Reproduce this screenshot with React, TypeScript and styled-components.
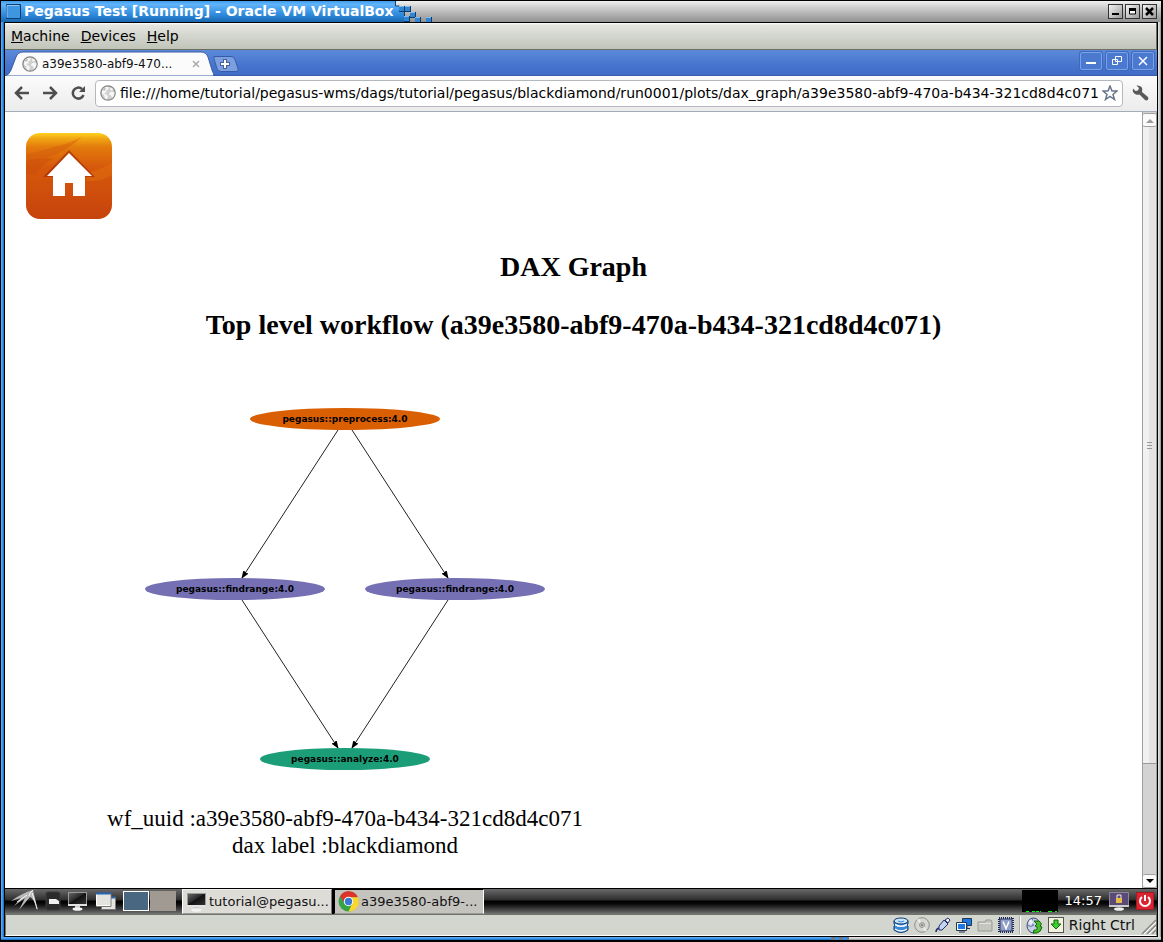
import React from 'react';
import styled, { createGlobalStyle } from 'styled-components';

const Global = createGlobalStyle`
  * { box-sizing: border-box; }
  body { margin: 0; background: #000; font-family: "DejaVu Sans", sans-serif; }
  button, input { font-family: inherit; color: inherit; margin: 0; }
  button { border: 0; padding: 0; background: none; }
  svg { display: block; flex: none; }
`;

const Frame = styled.div`
  display: flex;
  flex-direction: column;
  min-height: 100vh;
  padding: 1px 2px 2px 1px;
  background: #000;
`;

const TitleBar = styled.header`
  display: flex;
  flex: none;
  height: 21px;
  background: linear-gradient(#f0f0f0, #cfcfcf 30%, #909090);
`;

const Title = styled.h1`
  display: flex;
  align-items: center;
  gap: 3px;
  margin: 0;
  padding: 0 0 1px 5px;
  background: linear-gradient(#3d9cec, #62b4fb 15%, #2a86d8 70%, #1b66ad);
  color: #fff;
  font-size: 14px;
  line-height: 20px;
  font-weight: bold;
  white-space: nowrap;
`;

const TitleButtons = styled.div`
  display: flex;
  align-items: center;
  gap: 2px;
  margin-left: auto;
  padding-right: 4px;
`;

const FrameButton = styled.button`
  display: grid;
  place-items: center;
  width: 15px;
  height: 15px;
  border: 1px solid #333;
  background: linear-gradient(135deg, #f4f4f4, #9a9a9a);
`;

const Middle = styled.div`
  display: flex;
  flex: 1;
`;

const Edge = styled.div<{ $tone: 'blue' | 'grey' }>`
  flex: none;
  width: 3px;
  background: ${(p) =>
    p.$tone === 'blue'
      ? 'linear-gradient(90deg, #62b4fb, #2e90ee 60%, #1b66ad)'
      : 'linear-gradient(90deg, #e8e8e8, #c6c6c6 60%, #888)'};
`;

const Client = styled.main`
  display: flex;
  flex: 1;
  flex-direction: column;
  min-width: 0;
  border: 1px solid #000;
`;

const BottomEdge = styled.div`
  display: flex;
  flex: none;
  height: 3px;
  background: linear-gradient(#e8e8e8, #c6c6c6 60%, #888);
`;

const BottomBlue = styled.div`
  flex: 843;
  background: linear-gradient(#62b4fb, #2e90ee 60%, #1b66ad);
`;

const BottomGrey = styled.div`
  flex: 317;
`;

const MenuBar = styled.nav`
  display: flex;
  flex: none;
  gap: 11px;
  height: 27px;
  padding: 0 6px;
  border: solid #6c6e64;
  border-width: 0 1px 1px 0;
  background: linear-gradient(#fff, #e3e5df 8%, #c1c4b9);
`;

const MenuItem = styled.button`
  color: #000;
  font-size: 14px;
  &::first-letter { text-decoration: underline; }
`;

const TabStrip = styled.div`
  display: flex;
  flex: none;
  height: 26px;
  background: linear-gradient(#5c8ad9, #4774cd 60%, #3f6bc6);
  box-shadow: inset 0 -1px #3a5da8;
`;

const Tab = styled.div`
  position: relative;
  display: flex;
  align-items: center;
  width: 208px;
  padding: 1px 13px 0 17px;
`;

const TabShape = styled.svg`
  position: absolute;
  left: 0;
  top: 0;
`;

const TabLabel = styled.button`
  position: relative;
  display: flex;
  flex: 1;
  align-items: center;
  gap: 4px;
  color: #111;
  font-size: 12px;
`;

const TabClose = styled.button`
  position: relative;
`;

const NewTab = styled.button`
  align-self: flex-start;
  margin-top: 6px;
`;

const WindowButtons = styled.div`
  display: flex;
  gap: 4px;
  margin: 2px 3px 0 auto;
`;

const WindowButton = styled.button`
  display: grid;
  place-items: center;
  width: 22px;
  height: 18px;
  border: 1px solid #7ba2e8;
  border-radius: 2px;
  background: #4b79d0;
  box-shadow: 0 0 0 1px #3f69bd;
`;

const Toolbar = styled.div`
  display: flex;
  flex: none;
  align-items: center;
  gap: 9px;
  height: 36px;
  padding: 0 8px 1px 9px;
  border-bottom: 1px solid #a3acb8;
  background: linear-gradient(#fbfbfb, #ececec);
`;

const NavButtons = styled.div`
  display: flex;
  gap: 12px;
`;

const ToolButton = styled.button`
  flex: none;
`;

const AddressBar = styled.form`
  display: flex;
  flex: 1;
  align-items: center;
  min-width: 0;
  height: 27px;
  padding: 0 4px;
  border: 1px solid #b4b8bd;
  border-radius: 4px;
  background: #fff;
`;

const AddressInput = styled.input`
  flex: 1;
  min-width: 0;
  border: 0;
  outline: 0;
  padding: 0 0 0 4px;
  background: none;
  color: #000;
  font-size: 14px;
`;

const Viewport = styled.div`
  display: flex;
  flex: 1;
  background: #fff;
`;

const Page = styled.article`
  flex: 1;
  min-width: 0;
  padding: 20px 0 24px;
  color: #000;
  font-family: "Liberation Serif", serif;
`;

const HomeLink = styled.a`
  display: block;
  width: 88px;
  margin-left: 20px;
`;

const Heading = styled.h2`
  margin: 0 0 26px;
  font-size: 28px;
  line-height: 32px;
  text-align: center;
`;

const Headings = styled.header`
  padding-top: 31px;
`;

const Figure = styled.figure`
  width: 680px;
  max-width: 100%;
  margin: 0;
  padding-top: 40px;
  text-align: center;
`;

const Graph = styled.svg`
  margin: 0 auto;
`;

const Caption = styled.figcaption`
  padding-top: 34px;
  font-size: 23px;
  line-height: 27px;
`;

const Scrollbar = styled.div`
  display: flex;
  flex: none;
  flex-direction: column;
  width: 15px;
  padding-top: 1px;
  border: solid #a0a0a0;
  border-width: 0 1px;
  background: #d3d3d3;
`;

const ScrollArrow = styled.button`
  display: grid;
  flex: none;
  place-items: center;
  height: 14px;
  border: solid #a0a0a0;
  border-width: 1px 0;
  border-radius: 2px;
  background: #fbfbfb;
`;

const Thumb = styled.div`
  display: grid;
  flex: 637;
  place-items: center;
  border-bottom: 1px solid #999;
  background: linear-gradient(90deg, #f1f1f1 50%, #e4e4e4 50%);
`;

const Track = styled.div`
  flex: 110;
`;

const Taskbar = styled.footer`
  display: flex;
  flex: none;
  height: 26px;
  border-top: 1px solid #000;
  background: linear-gradient(#6a6a6a, #2c2c2c 45%, #000 47%, #0a0a0a 60%, #5c5c5c 92%, #777);
`;

const Launchers = styled.div`
  display: flex;
  align-items: center;
  gap: 6px;
  padding: 0 6px 2px 4px;
`;

const Pager = styled.div`
  display: flex;
  gap: 1px;
`;

const Desk = styled.button<{ $active?: boolean }>`
  width: 26px;
  height: 20px;
  border: 1px solid ${(p) => (p.$active ? '#fff' : '#a09a92')};
  background: ${(p) => (p.$active ? '#4a6782' : '#a09a92')};
`;

const Tasks = styled.div`
  display: flex;
  gap: 2px;
  background: #000;
`;

const Task = styled.button<{ $active?: boolean }>`
  display: flex;
  align-items: center;
  gap: 2px;
  width: 150px;
  padding: 0 0 0 3px;
  border: 1px solid;
  border-color: ${(p) => (p.$active ? '#000 #fff #999 #000' : '#eee #777 #999 #fff')};
  background: ${(p) => (p.$active ? '#c5c3be' : '#dddcd7')};
  color: #111;
  font-size: 13px;
  white-space: nowrap;
`;

const Tray = styled.div`
  display: flex;
  align-items: center;
  gap: 7px;
  margin-left: auto;
  padding: 0 3px 2px 0;
  color: #fff;
  font-size: 13px;
`;

const StatusBar = styled.footer`
  display: flex;
  flex: none;
  align-items: center;
  justify-content: flex-end;
  gap: 5px;
  height: 22px;
  border: 1px solid #6f7267;
  border-bottom-color: #fff;
  background: #d3d6ce;
  color: #111;
  font-size: 14px;
`;

const Separator = styled.span`
  width: 2px;
  height: 18px;
  border-left: 1px solid #aaa;
  background: #fff;
`;

const Globe = () => (
  <svg width="16" height="16" viewBox="0 0 16 16">
    <circle cx="8" cy="8" r="7.2" fill="#cfcfcf" stroke="#858585" strokeWidth="1.2" />
    <path d="M2 6.500 4 3l3-1.300 2 .8-1 2-2 1.500 1 1.500H5L4.500 9l2 .5L8 11l-1 3.500-2-1-1-3.500-2-1.500z" fill="#f6f6f6" />
    <path d="m10.500 2.500 2.500 1.500-1 1.500-2-.5zM9.500 7.500l2.500-1 2.500 1-.5 3-2 2.500-1-2.500-2-1z" fill="#f6f6f6" />
    <path d="m3 4 2-1 1 1-2 2z" fill="#b5b5b5" />
  </svg>
);

const Monitor = () => (
  <svg width="21" height="20" viewBox="0 0 21 20">
    <defs>
      <linearGradient id="screen" x2="1" y2="1"><stop stopColor="#666" /><stop offset=".45" stopColor="#2a2a2a" /><stop offset=".5" stopColor="#111" /><stop offset="1" stopColor="#333" /></linearGradient>
    </defs>
    <path d="M1 1h19v14H1z" fill="#9a9a9a" />
    <path d="M2 2h17v11H2z" fill="url(#screen)" />
    <path d="M1 13h19v2H1z" fill="#e2e2e2" />
    <path d="M8 15h5v2H8z" fill="#ccc" />
    <ellipse cx="10.500" cy="18" rx="5" ry="1.800" fill="#f2f2f2" />
  </svg>
);

const HomeIcon = () => (
  <svg width="88" height="88" viewBox="0 0 88 88" role="img" aria-label="Home">
    <defs>
      <linearGradient id="home" x2="0" y2="1">
        <stop stopColor="#ffd21c" /><stop offset=".06" stopColor="#f2a814" /><stop offset=".16" stopColor="#e37c0c" />
        <stop offset=".4" stopColor="#d6580c" /><stop offset="1" stopColor="#c6430c" />
      </linearGradient>
    </defs>
    <rect x="1" y="1" width="86" height="86" rx="14" fill="url(#home)" />
    <path d="M2 30Q34 26 57 5q-14 7-28 10Q13 20 2 22z" fill="#cf560c" opacity=".4" />
    <path d="M1 29q20-4 27-2-12 5-17 15L1 43z" fill="#c94c0c" opacity=".45" />
    <path d="M61 41q16-4 26-10v12q-11 7-25 6z" fill="#e98212" opacity=".3" />
    <path d="M44 18 18 45h10v3h32v-3h10z" fill="#a82f08" opacity=".7" />
    <path d="M44 21 22 44h6v20h12V51h8v13h12V44h7z" fill="#fff" />
  </svg>
);

const Pixels = () => {
  const blocks = [[5, 5], [11, 5], [16, 11], [10, 15], [21, 16], [32, 16]];
  return (
    <svg width="42" height="21" viewBox="0 0 42 21">
      <defs>
        <linearGradient id="ramp" x2="0" y2="1">
          <stop stopColor="#3d9cec" /><stop offset=".15" stopColor="#62b4fb" /><stop offset=".7" stopColor="#2a86d8" /><stop offset="1" stopColor="#1b66ad" />
        </linearGradient>
      </defs>
      <path d="M0 0h1v5h5v5h5v5h5v6H0z" fill="url(#ramp)" />
      <path d="M1.500 0v5h4v5h5v5" fill="none" stroke="#124272" />
      {blocks.map(([x, y]) => (
        <g key={`${x}-${y}`}>
          <rect x={x} y={y} width="6" height="6" fill="#103b66" />
          <rect x={x} y={y} width="5" height="5" fill="#2f86d2" />
          <path d={`M${x} ${y + 0.5}h5`} stroke="#7bbcf2" />
        </g>
      ))}
    </svg>
  );
};

const nodes = [
  { x: 201, y: 12, rx: 95, fill: '#d95f02', label: 'pegasus::preprocess:4.0' },
  { x: 91, y: 182, rx: 90, fill: '#7570b3', label: 'pegasus::findrange:4.0' },
  { x: 311, y: 182, rx: 90, fill: '#7570b3', label: 'pegasus::findrange:4.0' },
  { x: 201, y: 352, rx: 85, fill: '#1b9e77', label: 'pegasus::analyze:4.0' },
];

const edges = ['M194 23 98 171', 'M208 23 304 171', 'M98 193 194 341', 'M304 193 208 341'];

const WorkflowGraph = () => (
  <Graph width="402" height="364" viewBox="0 0 402 364">
    <defs>
      <marker id="tip" markerUnits="userSpaceOnUse" markerWidth="8" markerHeight="6" refX="7" refY="3" orient="auto">
        <path d="M0 0 8 3 0 6z" />
      </marker>
    </defs>
    {edges.map((d) => <path key={d} d={d} stroke="#222" markerEnd="url(#tip)" />)}
    {nodes.map((n) => (
      <g key={`${n.x}-${n.y}`}>
        <ellipse cx={n.x} cy={n.y} rx={n.rx} ry="11" fill={n.fill} />
        <text x={n.x} y={n.y + 3} fontSize="9" fontWeight="bold" textAnchor="middle" fontFamily="DejaVu Sans, sans-serif">{n.label}</text>
      </g>
    ))}
  </Graph>
);

const StatusIcons = () => (
  <>
    <svg width="16" height="16" viewBox="0 0 16 16">
      <path d="M1 4v3l1 1-1 1v4q7 5 14 0V9l-1-1 1-1V4z" fill="#3b8ad8" stroke="#11396e" />
      <ellipse cx="8" cy="4" rx="7" ry="3" fill="#c9e6fb" stroke="#11396e" />
      <path d="M2 7.500q6 3.500 12 0M2 12q6 4 12 0" stroke="#fff" strokeWidth="1.500" fill="none" />
      <path d="M5 4q3 2 6 0" stroke="#3b8ad8" fill="none" />
    </svg>
    <svg width="16" height="16" viewBox="0 0 16 16">
      <circle cx="8" cy="8" r="7.300" fill="#d6d6d2" stroke="#8d8d8a" />
      <path d="M8 8 4 2M8 8l4 6" stroke="#eee" strokeWidth="2" />
      <circle cx="8" cy="8" r="2.500" fill="#c4c4c0" stroke="#999" /><circle cx="8" cy="8" r="1" fill="#777" />
    </svg>
    <svg width="16" height="16" viewBox="0 0 16 16">
      <path d="M1 15q0-3 3-4" stroke="#25306a" strokeWidth="1.500" fill="none" />
      <path d="M4 9 9 3l4 4-6 6-3 0z" fill="#c4d2f6" stroke="#25306a" />
      <path d="m10 3 3-2 2 2-2 3z" fill="#f0f3fd" stroke="#25306a" />
    </svg>
    <svg width="16" height="16" viewBox="0 0 16 16">
      <path d="M6.500 1.500h9v7h-9z" fill="#1c78e4" stroke="#24364e" /><path d="M11 9v2M9 11.500h5" stroke="#24364e" />
      <path d="M.5 5.500h10v8H.5z" fill="#fff" stroke="#24364e" /><path d="M2 7h7v5H2z" fill="#1c78e4" /><path d="M3 15h6" stroke="#24364e" />
    </svg>
    <svg width="16" height="16" viewBox="0 0 16 16"><path d="M1 5h7l1-2h5l1 2v9H1z" fill="#c5c6c0" stroke="#999b95" /><path d="M2 6.500h12" stroke="#e5e5e0" /></svg>
    <svg width="16" height="16" viewBox="0 0 16 16">
      <rect x="1" y="1" width="14" height="14" fill="none" stroke="#1e2950" strokeWidth="2" strokeDasharray="1 1" />
      <rect x="2" y="2" width="12" height="12" fill="#8f9fc6" stroke="#2c3968" />
      <path d="m5 4.500 3 7 3-7" fill="none" stroke="#fff" strokeWidth="1.500" />
    </svg>
    <Separator />
    <svg width="17" height="17" viewBox="0 0 17 17">
      <ellipse cx="7.500" cy="8.500" rx="6.500" ry="7.500" fill="#c6ceea" stroke="#3d4a70" />
      <path d="M7 1q-2 4 0 7M1 8q4 3 7 0" stroke="#66749d" fill="none" /><ellipse cx="5" cy="5" rx="2" ry="2.500" fill="#eef1fb" />
      <path d="M8 4h5q4 3 1 5l2 1q-1 5-5 6H7l1-3q4 0 3-3L9 9l2-2z" fill="#45bd2c" stroke="#17630f" />
    </svg>
    <svg width="16" height="16" viewBox="0 0 16 16"><rect x=".5" y=".5" width="15" height="15" fill="#f3f1dd" stroke="#555" /><path d="M6 3h4v4h3l-5 5-5-5h3z" fill="#3fce30" stroke="#0b6b10" /></svg>
  </>
);

export default function App() {
  return (
    <Frame>
      <Global />
      <TitleBar>
        <Title>
          <svg width="15" height="15" viewBox="0 0 15 15"><path d="M.5.500h14v14H.5z" fill="#3e96e0" stroke="#0d3c70" /><path d="M1 13.500V1.500h12" stroke="#8fc8f8" fill="none" /></svg>
          Pegasus Test [Running] - Oracle VM VirtualBox
        </Title>
        <Pixels />
        <TitleButtons>
          <FrameButton aria-label="Minimize"><svg width="9" height="9"><path d="M1 7h7" stroke="#000" strokeWidth="2" /></svg></FrameButton>
          <FrameButton aria-label="Maximize"><svg width="9" height="9"><path d="M1.500 3h6v4h-6z" fill="#fff" stroke="#000" /><path d="M1 2.500h7" stroke="#000" strokeWidth="3" /></svg></FrameButton>
          <FrameButton aria-label="Close"><svg width="9" height="9"><path d="m1 1 7 7M8 1 1 8" stroke="#000" strokeWidth="2.500" /></svg></FrameButton>
        </TitleButtons>
      </TitleBar>
      <Middle>
        <Edge $tone="blue" />
        <Client>
          <MenuBar>
            <MenuItem>Machine</MenuItem>
            <MenuItem>Devices</MenuItem>
            <MenuItem>Help</MenuItem>
          </MenuBar>
          <TabStrip>
            <Tab>
              <TabShape width="208" height="26" viewBox="0 0 208 26">
                <path d="M0 26q4-1 6-6l5-13q2-5 7-5h178q5 0 7 5l4 13q1 4 4 6z" fill="#fbfbfb" stroke="#3a5da8" />
              </TabShape>
              <TabLabel><Globe />a39e3580-abf9-470...</TabLabel>
              <TabClose aria-label="Close tab"><svg width="8" height="8"><path d="m1 1 6 6M7 1 1 7" stroke="#aaa" strokeWidth="1.500" /></svg></TabClose>
            </Tab>
            <NewTab aria-label="New tab">
              <svg width="26" height="16" viewBox="0 0 26 16"><path d="M1 .5h17q3 0 4 3l3 9q1 3-2 3H8q-3 0-4-3L1 3z" fill="#7c9fe0" stroke="#365ba9" /><path d="M12 3v10M7 8h10" stroke="#43639f" strokeWidth="4" /><path d="M12 4v8M8 8h8" stroke="#fff" strokeWidth="2" /></svg>
            </NewTab>
            <WindowButtons>
              <WindowButton aria-label="Minimize window"><svg width="10" height="10"><path d="M0 7h10" stroke="#fff" strokeWidth="2" /></svg></WindowButton>
              <WindowButton aria-label="Restore window"><svg width="10" height="10"><path d="M3.500.500h6v5h-6zM.500 3.500h5v5h-5z" stroke="#fff" fill="none" /></svg></WindowButton>
              <WindowButton aria-label="Close window"><svg width="10" height="10"><path d="m1 1 8 8M9 1 1 9" stroke="#fff" strokeWidth="1.500" /></svg></WindowButton>
            </WindowButtons>
          </TabStrip>
          <Toolbar>
            <NavButtons>
              <ToolButton aria-label="Back"><svg width="16" height="16" viewBox="0 0 16 16"><path d="M15 8H3M8 2 2 8l6 6" fill="none" stroke="#4e4e4e" strokeWidth="2.500" /></svg></ToolButton>
              <ToolButton aria-label="Forward"><svg width="16" height="16" viewBox="0 0 16 16"><path d="M1 8h12M8 2l6 6-6 6" fill="none" stroke="#4e4e4e" strokeWidth="2.500" /></svg></ToolButton>
              <ToolButton aria-label="Reload"><svg width="16" height="16" viewBox="0 0 16 16"><path d="M12 4a5.500 5.500 0 1 0 1.500 6" fill="none" stroke="#4e4e4e" strokeWidth="2.500" /><path d="M15 1v6H9z" fill="#4e4e4e" /></svg></ToolButton>
            </NavButtons>
            <AddressBar>
              <Globe />
              <AddressInput aria-label="Address" defaultValue="file:///home/tutorial/pegasus-wms/dags/tutorial/pegasus/blackdiamond/run0001/plots/dax_graph/a39e3580-abf9-470a-b434-321cd8d4c071" />
              <ToolButton type="button" aria-label="Bookmark this page"><svg width="16" height="16" viewBox="0 0 16 16"><path d="m8 1 2 5h5l-4 3.500 1.500 5L8 11.500l-4.500 3 1.500-5L1 6h5z" fill="#fff" stroke="#66758c" strokeWidth="1.500" /></svg></ToolButton>
            </AddressBar>
            <ToolButton aria-label="Settings"><svg width="17" height="18" viewBox="0 0 17 18"><path d="M4.500 1.500 7 4 6 6.500 3.500 7 1 4.500Q0 9 4 10.500q2 .5 3.500 0L13 16q2 1 3-.5.8-1.500 0-2.500L10 8q1-3-.5-5Q7.500 1 4.500 1.500z" fill="#5a5a5a" /></svg></ToolButton>
          </Toolbar>
          <Viewport>
            <Page>
              <HomeLink href="#"><HomeIcon /></HomeLink>
              <Headings>
                <Heading>DAX Graph</Heading>
                <Heading>Top level workflow (a39e3580-abf9-470a-b434-321cd8d4c071)</Heading>
              </Headings>
              <Figure>
                <WorkflowGraph />
                <Caption>
                  wf_uuid :a39e3580-abf9-470a-b434-321cd8d4c071<br />
                  dax label :blackdiamond
                </Caption>
              </Figure>
            </Page>
            <Scrollbar>
              <ScrollArrow aria-label="Scroll up"><svg width="8" height="5"><path d="M0 5 4 1l4 4z" fill="#999" /></svg></ScrollArrow>
              <Thumb><svg width="5" height="7"><path d="M0 .500h5M0 3.500h5M0 6.500h5" stroke="#999" /></svg></Thumb>
              <Track />
              <ScrollArrow aria-label="Scroll down"><svg width="8" height="5"><path d="M0 0h8L4 4z" fill="#000" /></svg></ScrollArrow>
            </Scrollbar>
          </Viewport>
          <Taskbar>
            <Launchers>
              <svg width="30" height="23" viewBox="0 0 30 23">
                <path d="M2 12Q13 4 24 1l5 21Q24 8 21 8L10 21l6-12L5 17l7-8z" fill="#b9b9b9" />
                <path d="M24 1q-4 3-4 6M23 4q3 8 5 16M18 6 8 13" stroke="#f3f3f3" fill="none" />
              </svg>
              <svg width="16" height="20" viewBox="0 0 16 20"><rect x="1" y="1" width="14" height="18" rx="2" fill="#2a2a2a" stroke="#3d3d3d" /><path d="M4 8h7l3 2v3H4z" fill="#f0f0f0" /></svg>
              <Monitor />
              <svg width="23" height="20" viewBox="0 0 23 20"><path d="M7.500 6.500h14v12h-14z" fill="#e6e6e0" stroke="#777" /><path d="M7 6.500h14" stroke="#2566b4" strokeWidth="2" /><path d="M2.500 2.500h14v12h-14z" fill="#e4e4de" stroke="#fff" /><path d="M2 2.500h15" stroke="#2566b4" strokeWidth="2" /><path d="M2 15.500h15V3" fill="none" stroke="#777" /></svg>
              <Pager><Desk $active aria-label="Desktop 1" /><Desk aria-label="Desktop 2" /></Pager>
            </Launchers>
            <Tasks>
              <Task><Monitor />tutorial@pegasu...</Task>
              <Task $active>
                <svg width="21" height="21" viewBox="0 0 20 20"><circle cx="10" cy="10" r="9.500" fill="#35a346" /><path d="M2 5A9.500 9.500 0 0 1 19 6H10a4 4 0 0 0-4 5z" fill="#dd3328" /><path d="M19 6a9.500 9.500 0 0 1-9 13.500L14 11a4 4 0 0 0-3-5z" fill="#fbd62b" /><circle cx="10" cy="10" r="4.500" fill="#fff" /><circle cx="10" cy="10" r="3.500" fill="#3979cf" /></svg>
                a39e3580-abf9-...
              </Task>
            </Tasks>
            <Tray>
              <svg width="36" height="22" viewBox="0 0 36 22"><path d="M0 0h36v22H0z" /><path d="M4 21.500h3M10 21.500h3M14 21.500h3M18 21.500h1M26 21.500h4M33 21.500h2" stroke="#0f0" /></svg>
              <time>14:57</time>
              <svg width="20" height="20" viewBox="0 0 20 20"><path d="M.5 1.500h19v13H.5z" fill="#5b4a78" stroke="#8d8798" /><path d="M0 15h20" stroke="#ccc" strokeWidth="2" /><ellipse cx="10" cy="18" rx="5" ry="1.800" fill="#eee" /><path d="M7 7h6v5H7z" fill="#e6bd49" /><path d="M8 7V4h4v3" fill="none" stroke="#eee" /></svg>
              <svg width="18" height="18" viewBox="0 0 18 18"><rect x=".5" y=".5" width="17" height="17" fill="#dc2330" stroke="#a51a22" /><path d="M6 5a5 5 0 1 0 6 0M9 3v6" fill="none" stroke="#fff" strokeWidth="2" /></svg>
            </Tray>
          </Taskbar>
          <StatusBar>
            <StatusIcons />
            <span>Right Ctrl</span>
            <svg width="16" height="18" viewBox="0 0 16 18"><path d="M2 18 16 4M7 18l9-9M12 18l4-4" stroke="#888" strokeWidth="1.500" /><path d="M3 19 17 5M8 19l9-9" stroke="#fff" /></svg>
          </StatusBar>
        </Client>
        <Edge $tone="grey" />
      </Middle>
      <BottomEdge>
        <BottomBlue />
        <svg width="18" height="3"><path d="M0 0h18v3H0z" fill="#777" /><path d="M4 0h4v3H4zM12 0h4v3h-4z" fill="#2e90ee" /></svg>
        <BottomGrey />
      </BottomEdge>
    </Frame>
  );
}
